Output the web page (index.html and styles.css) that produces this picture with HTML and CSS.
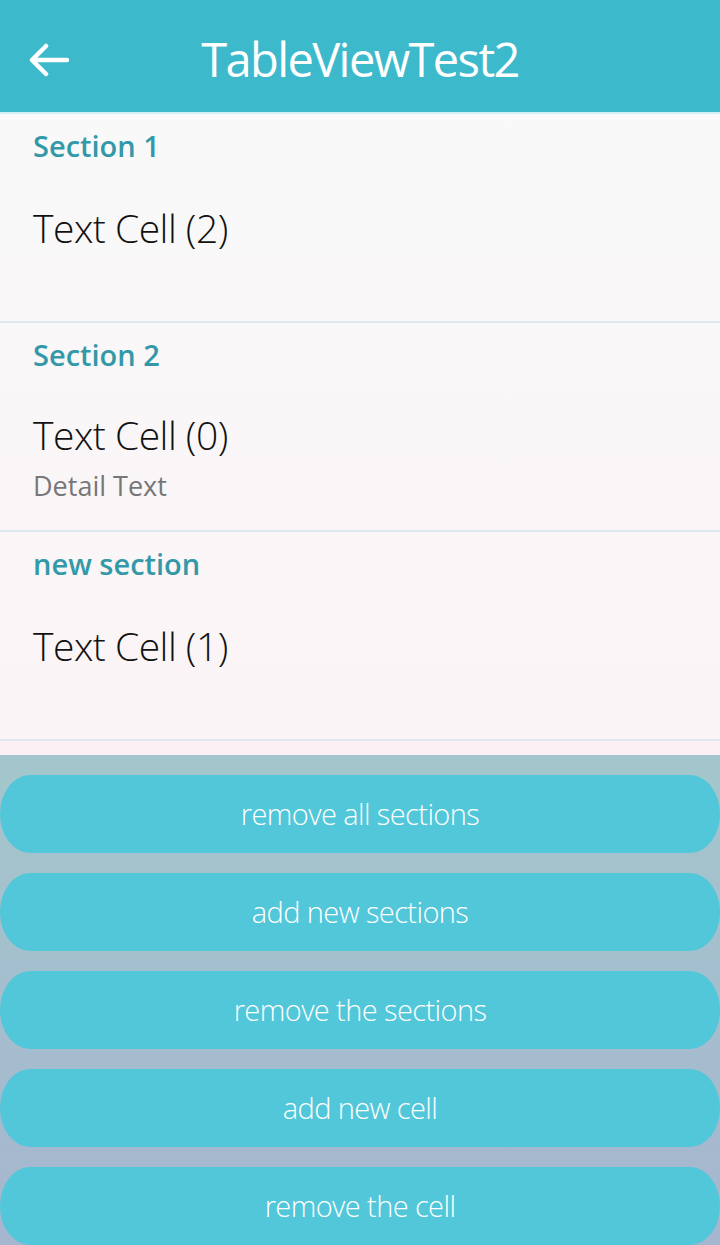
FILE: index.html
```html
<!DOCTYPE html>
<html>
<head>
<meta charset="utf-8">
<link rel="stylesheet" href="styles.css">
</head>
<body>
<div class="app">
  <header class="appbar">
    <svg class="back" width="42" height="36" viewBox="0 0 42 36">
      <path d="M38 18 H4 M17 4 L3 18 L17 32" fill="none" stroke="#fff" stroke-width="4.5" stroke-linecap="round" stroke-linejoin="round"/>
    </svg>
    <h1 class="title">TableViewTest2</h1>
  </header>
  <main class="list">
    <section class="group">
      <div class="group-head">Section 1</div>
      <div class="cell">
        <div class="cell-text">Text Cell (2)</div>
      </div>
    </section>
    <section class="group">
      <div class="group-head">Section 2</div>
      <div class="cell cell--detail">
        <div class="cell-text">Text Cell (0)</div>
        <div class="cell-detail">Detail Text</div>
      </div>
    </section>
    <section class="group">
      <div class="group-head">new section</div>
      <div class="cell">
        <div class="cell-text">Text Cell (1)</div>
      </div>
    </section>
    <div class="list-tail"></div>
  </main>
  <footer class="actions">
    <button class="btn">remove all sections</button>
    <button class="btn">add new sections</button>
    <button class="btn">remove the sections</button>
    <button class="btn">add new cell</button>
    <button class="btn">remove the cell</button>
  </footer>
</div>
</body>
</html>
```
FILE: styles.css
```css
* { box-sizing: border-box; }
html, body { margin: 0; padding: 0; }
body {
  width: 720px;
  height: 1245px;
  overflow: hidden;
  font-family: "Open Sans", "Noto Sans", sans-serif;
  background: #a3c6cc;
}
.app {
  display: flex;
  flex-direction: column;
  height: 1245px;
}
.appbar {
  height: 116px;
  background: #3db9cc;
  border-bottom: 2px solid #d3eef4;
  display: flex;
  align-items: center;
  position: relative;
}
.back {
  position: absolute;
  left: 29px;
  top: 42px;
}
.title {
  margin: 0 auto;
  padding-top: 6px;
  color: #fff;
  font-family: "Open Sans", sans-serif;
  font-weight: 400;
  font-size: 47px;
  letter-spacing: -1.6px;
}
.list {
  background: linear-gradient(#f9f9f9, #fbf4f6);
}
.group {
  height: 209px;
  border-bottom: 2px solid #dde9ee;
  padding-left: 33px;
}
.group-head {
  padding-top: 12px;
  height: 64px;
  color: #3399a9;
  font-weight: 600;
  font-size: 29px;
  line-height: 40px;
}
.cell {
  padding-top: 25px;
}
.cell--detail {
  padding-top: 23px;
}
.cell-text {
  color: #111;
  font-weight: 300;
  font-size: 39px;
  line-height: 50px;
  letter-spacing: -0.5px;
}
.cell-detail {
  margin-top: 8px;
  color: #777;
  font-size: 27px;
  line-height: 36px;
}
.list-tail {
  height: 14px;
  background: #fcf0f4;
}
.actions {
  flex: 1;
  background: linear-gradient(#a3c6cc, #a6b6cf);
  display: flex;
  flex-direction: column;
  gap: 20px;
  padding-top: 20px;
}
.btn {
  height: 78px;
  padding-bottom: 3px;
  border: 0;
  border-radius: 30px / 39px;
  background: #52c7d9;
  color: #fff;
  font-family: "Open Sans", sans-serif;
  font-weight: 300;
  font-size: 29px;
  letter-spacing: -0.6px;
}
```
